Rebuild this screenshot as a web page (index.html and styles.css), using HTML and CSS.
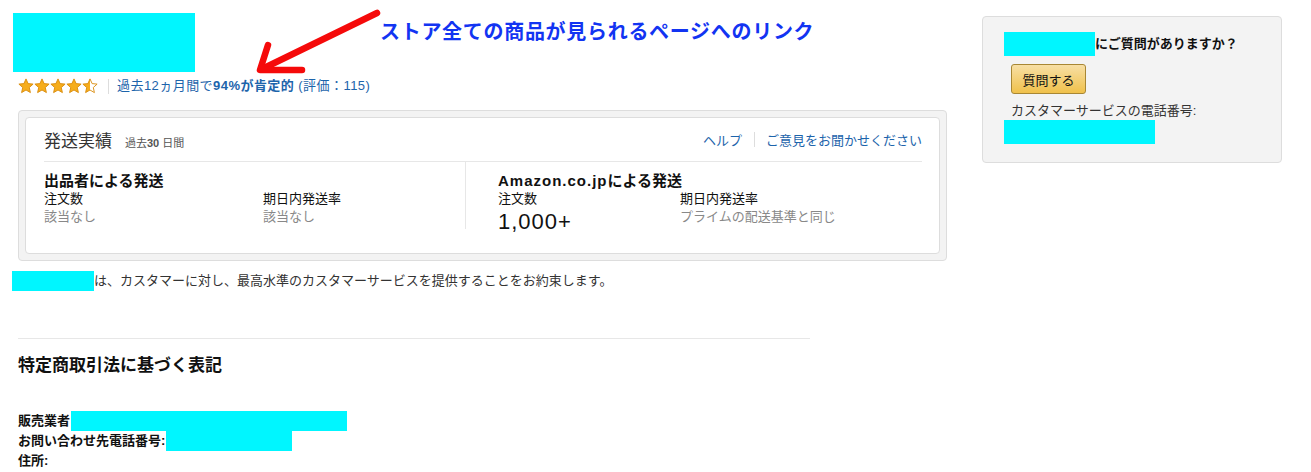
FILE: index.html
```html
<!DOCTYPE html>
<html lang="ja">
<head>
<meta charset="utf-8">
<title>Seller profile</title>
<link rel="stylesheet" href="styles.css">
</head>
<body>
<div class="page">
  <div class="main">
    <div class="logo redact"></div>
    <div class="rating">
      <svg class="stars" width="82" height="16" viewBox="0 0 82 16">
        <defs>
          <polygon id="st" points="8,0.9 10.1,5.6 15.1,6.1 11.3,9.5 12.4,14.6 8,12 3.6,14.6 4.7,9.5 0.9,6.1 5.9,5.6"/>
          <linearGradient id="half" x1="0" x2="1" y1="0" y2="0">
            <stop offset="0.5" stop-color="#f6ad1b"/>
            <stop offset="0.5" stop-color="#ffffff"/>
          </linearGradient>
        </defs>
        <use href="#st" x="0" fill="#f6ad1b" stroke="#d88a0a" stroke-width="0.9"/>
        <use href="#st" x="16" fill="#f6ad1b" stroke="#d88a0a" stroke-width="0.9"/>
        <use href="#st" x="32" fill="#f6ad1b" stroke="#d88a0a" stroke-width="0.9"/>
        <use href="#st" x="48" fill="#f6ad1b" stroke="#d88a0a" stroke-width="0.9"/>
        <use href="#st" x="64" fill="url(#half)" stroke="#d88a0a" stroke-width="0.9"/>
      </svg>
      <span class="vsep"></span>
      <a class="rating-link" href="#">過去12ヵ月間で<b>94%が肯定的</b> (評価：115)</a>
    </div>

    <div class="perf-outer">
      <div class="perf">
        <div class="perf-head">
          <div class="perf-title">発送実績<span class="perf-period">過去<b>30</b> 日間</span></div>
          <div class="perf-links"><a href="#">ヘルプ</a><span class="lsep"></span><a href="#">ご意見をお聞かせください</a></div>
        </div>
        <div class="perf-body">
          <div class="perf-col perf-col-left">
            <div class="col-title">出品者による発送</div>
            <div class="metrics metrics-left">
              <div class="metric"><div class="m-label">注文数</div><div class="m-value muted">該当なし</div></div>
              <div class="metric"><div class="m-label">期日内発送率</div><div class="m-value muted">該当なし</div></div>
            </div>
          </div>
          <div class="perf-col perf-col-right">
            <div class="col-title"><span class="latin">Amazon.co.jp</span>による発送</div>
            <div class="metrics metrics-right">
              <div class="metric"><div class="m-label">注文数</div><div class="m-value big">1,000+</div></div>
              <div class="metric"><div class="m-label">期日内発送率</div><div class="m-value muted">プライムの配送基準と同じ</div></div>
            </div>
          </div>
        </div>
      </div>
    </div>

    <p class="promise"><span class="redact r-promise"></span>は、カスタマーに対し、最高水準のカスタマーサービスを提供することをお約束します。</p>

    <hr class="rule">
    <h2 class="legal-title">特定商取引法に基づく表記</h2>
    <div class="legal">
      <div class="legal-line">販売業者<span class="redact r-seller"></span></div>
      <div class="legal-line">お問い合わせ先電話番号:<span class="redact r-phone"></span></div>
      <div class="legal-line">住所:</div>
    </div>
  </div>

  <aside class="side">
    <div class="ask"><span class="redact r-name"></span>にご質問がありますか？</div>
    <button class="ask-btn" type="button">質問する</button>
    <div class="cs-label">カスタマーサービスの電話番号:</div>
    <div class="redact r-csphone"></div>
  </aside>

  <div class="annotation">ストア全ての商品が見られるページへのリンク</div>
  <svg class="arrow" width="140" height="80" viewBox="250 0 140 80">
    <g fill="none" stroke="#f50a0a" stroke-width="6.5" stroke-linecap="round" stroke-linejoin="round">
      <line x1="377" y1="13" x2="262" y2="69"/>
      <polyline points="268,45 260,70 302,70"/>
    </g>
  </svg>
</div>
</body>
</html>
```

FILE: styles.css
```css
* { box-sizing: border-box; }
html, body { margin: 0; padding: 0; background: #fff; }
body {
  font-family: "Liberation Sans", "Noto Sans CJK JP", sans-serif;
  font-size: 13px;
  color: #111;
}
a { color: #1d64ab; text-decoration: none; }

.page {
  position: relative;
  display: flex;
  align-items: flex-start;
  width: 1311px;
  height: 472px;
  overflow: hidden;
}
.main { width: 947px; flex: none; }

.redact { background: #00f6ff; display: inline-block; vertical-align: top; }

.logo { display: block; width: 182px; height: 59px; margin: 13px 0 0 13px; }

.rating {
  display: flex;
  align-items: center;
  height: 22px;
  margin: 3px 0 0 18px;
}
.stars { display: block; margin-top: -1px; }
.vsep { width: 1px; height: 15px; background: #ddd; margin: 0 8px 0 8px; }
.rating-link { font-size: 13px; line-height: 22px; letter-spacing: 0.45px; }
.rating-link b { font-weight: 700; }

.perf-outer {
  margin: 13px 0 0 18px;
  width: 929px;
  background: #f3f3f3;
  border: 1px solid #ddd;
  border-radius: 4px;
  padding: 6px;
}
.perf {
  background: #fff;
  border: 1px solid #ddd;
  border-radius: 4px;
  padding: 0 17px 18px 18px;
}
.perf-head {
  display: flex;
  justify-content: space-between;
  align-items: center;
  height: 44px;
  border-bottom: 1px solid #e7e7e7;
}
.perf-title { font-size: 17px; color: #333; display: flex; align-items: baseline; }
.perf-period { font-size: 11px; color: #555; margin-left: 13px; }
.perf-period b { font-weight: 700; }
.perf-links { display: flex; align-items: center; font-size: 13px; }
.lsep { width: 1px; height: 15px; background: #ddd; margin: 0 11px 0 12px; }

.perf-body { display: flex; align-items: flex-start; }
.perf-col { padding-top: 9px; }
.perf-col-left { width: 422px; border-right: 1px solid #e7e7e7; padding-bottom: 3px; }
.perf-col-right { padding-left: 32px; flex: 1; }
.col-title { font-size: 15px; font-weight: 700; line-height: 19px; color: #111; }
.latin { letter-spacing: 1px; }
.metrics { display: grid; }
.metrics-left { grid-template-columns: 219px 1fr; }
.metrics-right { grid-template-columns: 182px 1fr; }
.m-label { font-size: 13px; line-height: 18px; color: #111; }
.m-value { font-size: 13px; line-height: 18px; }
.muted { color: #888; }
.big { font-size: 22px; line-height: 27px; letter-spacing: 1px; color: #111; }

.promise {
  margin: 10px 0 0 12px;
  line-height: 20px;
  font-size: 13px;
  color: #333;
}
.r-promise { width: 82px; height: 20px; }

.rule {
  margin: 47px 0 0 18px;
  width: 792px;
  border: 0;
  border-top: 1px solid #e7e7e7;
  height: 0;
}
.legal-title {
  margin: 15px 0 0 18px;
  font-size: 17px;
  line-height: 24px;
  font-weight: 700;
  color: #111;
}
.legal { margin: 33px 0 0 18px; }
.legal-line { font-size: 13px; font-weight: 700; line-height: 20px; height: 20px; color: #111; }
.r-seller { width: 276px; height: 20px; margin-left: 1px; }
.r-phone { width: 126px; height: 20px; margin-left: 1px; }

.side {
  flex: none;
  width: 300px;
  margin: 16px 0 0 35px;
  background: #f3f3f3;
  border: 1px solid #ddd;
  border-radius: 4px;
  padding: 15px 20px 18px 21px;
}
.ask { font-size: 13px; font-weight: 700; line-height: 24px; height: 24px; color: #111; }
.r-name { width: 91px; height: 24px; }
.ask-btn {
  display: block;
  margin: 8px 0 0 7px;
  width: 75px;
  height: 30px;
  padding: 0;
  font-family: inherit;
  font-size: 13px;
  color: #111;
  background: linear-gradient(to bottom, #f7dfa5, #f0c14b);
  border: 1px solid #a88734;
  border-radius: 3px;
}
.cs-label { margin: 7px 0 0 7px; font-size: 13px; line-height: 20px; color: #333; }
.r-csphone { display: block; width: 151px; height: 24px; margin-top: -1px; }

.annotation {
  position: absolute;
  left: 380px;
  top: 17px;
  font-family: "Noto Sans CJK JP", sans-serif;
  font-size: 20px;
  font-weight: 700;
  line-height: 28px;
  color: #1234f2;
  letter-spacing: 0.7px;
  white-space: nowrap;
}
.arrow { position: absolute; left: 250px; top: 0; }
```
